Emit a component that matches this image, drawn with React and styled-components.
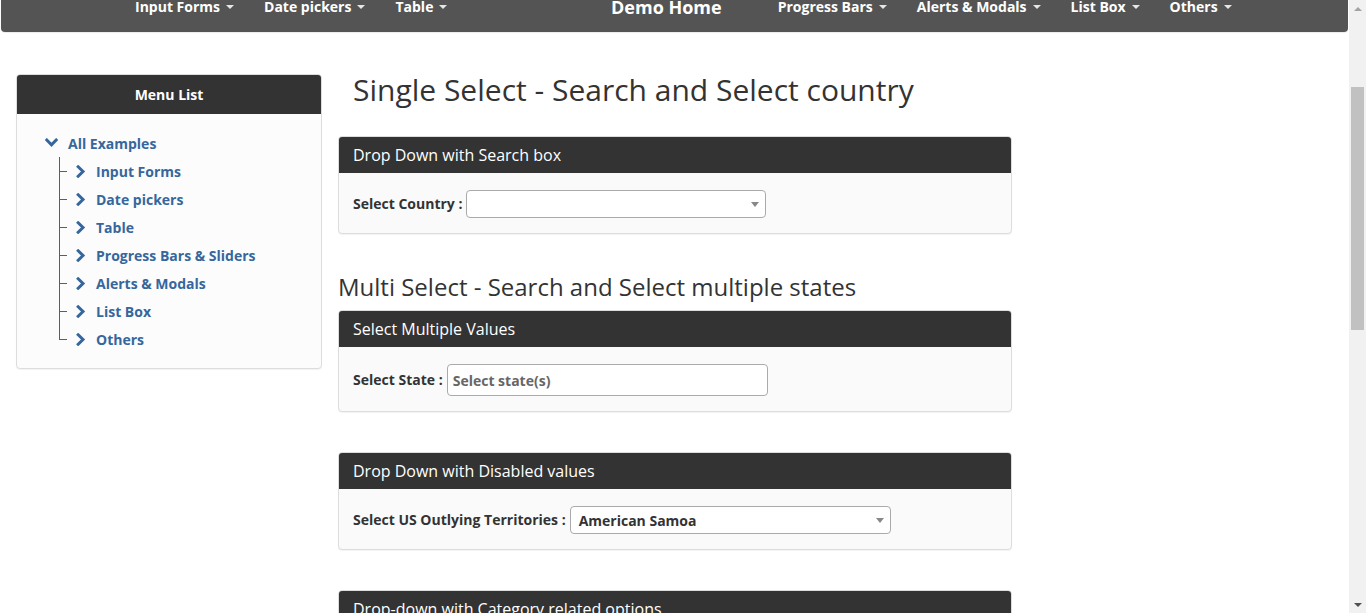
import React from "react"
import styled, { createGlobalStyle } from "styled-components"

const GlobalStyle = createGlobalStyle`
  html, body {
    margin: 0;
    padding: 0;
    overflow: hidden;
    background: #fff;
  }
  body {
    font-family: "Open Sans", "Liberation Sans", sans-serif;
    font-size: 14px;
    color: #333;
  }
  * { box-sizing: border-box; }
`

const Screen = styled.div`
  display: flex;
  width: 1366px;
  height: 613px;
  overflow: hidden;
`

const Page = styled.div`
  flex: 1;
  min-width: 0;
`

// top navigation (page is scrolled, so only the lower part shows)
const Navbar = styled.nav`
  display: flex;
  align-items: flex-start;
  height: 32px;
  margin: 0 1px;
  padding-left: 119px;
  background: #545454;
  border-radius: 0 0 4px 4px;
  box-shadow: 0 1px 1px rgba(0, 0, 0, 0.08);
`

const NavGroup = styled.ul`
  display: flex;
  list-style: none;
  margin: 0;
  padding: 0;
  width: ${(p) => p.$width || "auto"};
  margin-left: ${(p) => p.$offset || 0};
`

const NavLink = styled.li`
  display: flex;
  align-items: center;
  gap: 6px;
  padding: 0 15px;
  margin-top: -3px;
  line-height: 20px;
  font-weight: 700;
  font-size: 14px;
  color: #fff;
  white-space: nowrap;
`

const Caret = styled.span`
  display: inline-block;
  width: 0;
  height: 0;
  border-left: 4px solid transparent;
  border-right: 4px solid transparent;
  border-top: 4px solid #e6e6e6;
`

const Brand = styled.div`
  padding: 0 15px;
  margin-top: -6px;
  line-height: 26px;
  font-size: 18px;
  font-weight: 700;
  color: #fff;
  white-space: nowrap;
`

const Container = styled.div`
  display: flex;
  align-items: flex-start;
  gap: 16px;
  padding: 41px 0 0 16px;
`

const Sidebar = styled.aside`
  width: 306px;
  flex: none;
  margin-top: 1px;
  border: 1px solid #ddd;
  border-radius: 4px;
  background: #fcfcfc;
  box-shadow: 0 1px 1px rgba(0, 0, 0, 0.05);
  overflow: hidden;
`

const SideHeader = styled.div`
  height: 39px;
  display: flex;
  align-items: center;
  justify-content: center;
  background: #333;
  color: #fff;
  font-weight: 700;
  font-size: 14px;
`

const Tree = styled.ul`
  list-style: none;
  margin: 0;
  padding: 15px 0 15px 28px;
`

const TreeRow = styled.div`
  display: flex;
  align-items: center;
  height: 28px;
  color: #36679c;
  font-weight: 700;
  font-size: 14px;
  gap: ${(p) => p.$gap || "10px"};
`

const Children = styled.ul`
  list-style: none;
  margin: 0;
  padding: 0 0 0 14px;
`

const Child = styled.li`
  position: relative;
  padding-left: 17px;

  &::before {
    content: "";
    position: absolute;
    left: 0;
    top: 0;
    width: 1px;
    height: ${(p) => (p.$last ? "15px" : "100%")};
    background: #36679c;
  }
  &::after {
    content: "";
    position: absolute;
    left: 0;
    top: 14px;
    width: 8px;
    height: 1px;
    background: #36679c;
  }
`

const Chevron = ({ down }) => (
  <svg width={down ? 13 : 10} height={down ? 10 : 13} viewBox={down ? "0 0 13 10" : "0 0 10 13"}>
    {down ? (
      <polyline points="1.8,2 6.5,6.8 11.2,2" fill="none" stroke="#36679c" strokeWidth="3" strokeLinecap="square" />
    ) : (
      <polyline points="2.2,1.8 7,6.5 2.2,11.2" fill="none" stroke="#36679c" strokeWidth="3" strokeLinecap="square" />
    )}
  </svg>
)

const Main = styled.main`
  width: 674px;
  flex: none;
`

const PageTitle = styled.h1`
  margin: 0 0 30px;
  padding-left: 15px;
  font-size: 30px;
  line-height: 33px;
  font-weight: 400;
  color: #333;
`

const SubTitle = styled.h2`
  margin: 39px 0 10px;
  font-size: 24px;
  line-height: 27px;
  font-weight: 400;
  color: #333;
`

const Panel = styled.section`
  border: 1px solid #ddd;
  border-radius: 4px;
  background: #fafafa;
  box-shadow: 0 1px 1px rgba(0, 0, 0, 0.05);
  overflow: hidden;
  margin-top: ${(p) => p.$top || 0};
`

const PanelHeading = styled.div`
  height: 36px;
  display: flex;
  align-items: center;
  padding: 0 14px 1px;
  background: #333;
  color: #fff;
  font-size: 16px;
`

const PanelBody = styled.div`
  display: flex;
  align-items: center;
  gap: 4px;
  padding: 17px 14px 15px;
`

const Label = styled.label`
  font-weight: 700;
  font-size: 14px;
  color: #333;
  white-space: nowrap;
  margin-top: -2px;
`

const SelectBox = styled.div`
  position: relative;
  display: flex;
  align-items: center;
  width: ${(p) => p.$width};
  height: ${(p) => p.$height || "28px"};
  padding: 0 24px 0 ${(p) => p.$pad || "8px"};
  background: #fff;
  border: 1px solid #aaa;
  border-radius: 4px;
  font-weight: 700;
  font-size: 14px;
  color: ${(p) => (p.$placeholder ? "#666" : "#333")};
`

const SelectArrow = styled.span`
  position: absolute;
  right: 6px;
  top: 50%;
  margin-top: -2px;
  width: 0;
  height: 0;
  border-left: 4px solid transparent;
  border-right: 4px solid transparent;
  border-top: 5px solid #888;
`

const Scrollbar = styled.div`
  width: 17px;
  flex: none;
  display: flex;
  flex-direction: column;
  align-items: center;
  background: #f1f1f1;
`

const ScrollArrow = styled.div`
  height: 17px;
  width: 17px;
  display: flex;
  align-items: center;
  justify-content: center;
  &::before {
    content: "";
    width: 0;
    height: 0;
    border-left: 4px solid transparent;
    border-right: 4px solid transparent;
    ${(p) => (p.$down ? "border-top: 4px solid #505050;" : "border-bottom: 4px solid #a3a3a3;")}
  }
`

const ScrollTrack = styled.div`
  flex: 1;
  width: 100%;
  padding: 70px 2px 0;
`

const ScrollThumb = styled.div`
  height: 243px;
  background: #c1c1c1;
`

const leftNav = ["Input Forms", "Date pickers", "Table"]
const rightNav = ["Progress Bars", "Alerts & Modals", "List Box", "Others"]
const menu = ["Input Forms", "Date pickers", "Table", "Progress Bars & Sliders", "Alerts & Modals", "List Box", "Others"]

export default function App() {
  return (
    <>
      <GlobalStyle />
      <Screen>
        <Page>
          <Navbar>
            <NavGroup $width="476px">
              {leftNav.map((n) => (
                <NavLink key={n}>
                  {n} <Caret />
                </NavLink>
              ))}
            </NavGroup>
            <Brand>Demo Home</Brand>
            <NavGroup $offset="26px">
              {rightNav.map((n) => (
                <NavLink key={n}>
                  {n} <Caret />
                </NavLink>
              ))}
            </NavGroup>
          </Navbar>

          <Container>
            <Sidebar>
              <SideHeader>Menu List</SideHeader>
              <Tree>
                <li>
                  <TreeRow $gap="10px">
                    <Chevron down />
                    All Examples
                  </TreeRow>
                  <Children>
                    {menu.map((m, i) => (
                      <Child key={m} $last={i === menu.length - 1}>
                        <TreeRow>
                          <Chevron />
                          {m}
                        </TreeRow>
                      </Child>
                    ))}
                  </Children>
                </li>
              </Tree>
            </Sidebar>

            <Main>
              <PageTitle>Single Select - Search and Select country</PageTitle>
              <Panel>
                <PanelHeading>Drop Down with Search box</PanelHeading>
                <PanelBody>
                  <Label>Select Country :</Label>
                  <SelectBox $width="300px">
                    <SelectArrow />
                  </SelectBox>
                </PanelBody>
              </Panel>

              <SubTitle>Multi Select - Search and Select multiple states</SubTitle>
              <Panel>
                <PanelHeading>Select Multiple Values</PanelHeading>
                <PanelBody>
                  <Label>Select State :</Label>
                  <SelectBox $width="321px" $height="32px" $pad="5px" $placeholder>
                    Select state(s)
                  </SelectBox>
                </PanelBody>
              </Panel>

              <Panel $top="40px">
                <PanelHeading>Drop Down with Disabled values</PanelHeading>
                <PanelBody>
                  <Label>Select US Outlying Territories :</Label>
                  <SelectBox $width="321px">
                    American Samoa
                    <SelectArrow />
                  </SelectBox>
                </PanelBody>
              </Panel>

              <Panel $top="40px">
                <PanelHeading>Drop-down with Category related options</PanelHeading>
                <PanelBody>
                  <Label>Select Category :</Label>
                </PanelBody>
              </Panel>
            </Main>
          </Container>
        </Page>
        <Scrollbar>
          <ScrollArrow />
          <ScrollTrack>
            <ScrollThumb />
          </ScrollTrack>
          <ScrollArrow $down />
        </Scrollbar>
      </Screen>
    </>
  )
}
